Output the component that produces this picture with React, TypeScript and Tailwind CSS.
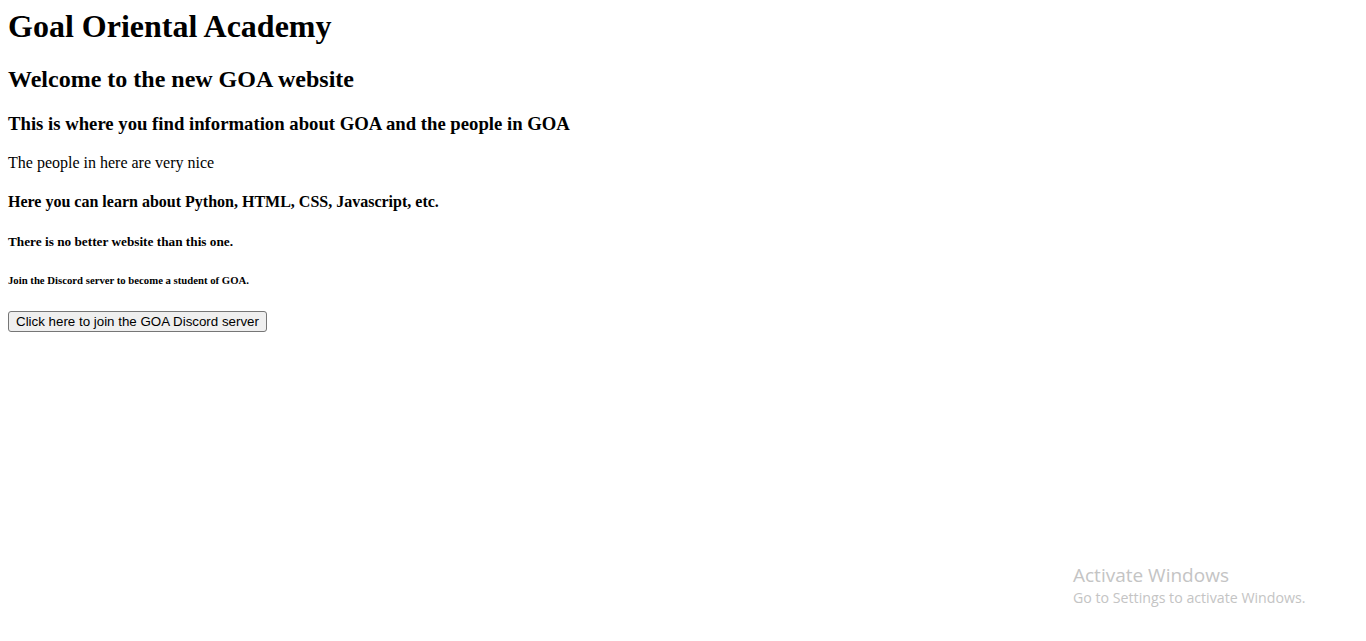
export default function App() {
  return (
    <div className="relative min-h-screen bg-white p-2 font-['Liberation_Serif',serif] text-black">
      <h1 className="mb-[21.44px] text-[32px] font-bold leading-[normal]">Goal Oriental Academy</h1>
      <h2 className="mb-[19.92px] text-[24px] font-bold leading-[normal]">Welcome to the new GOA website</h2>
      <h3 className="mb-[18.72px] text-[18.72px] font-bold leading-[normal]">
        This is where you find information about GOA and the people in GOA
      </h3>
      <p className="mb-[21.28px] text-[16px] leading-[normal]">The people in here are very nice</p>
      <h4 className="mb-[22.18px] text-[16px] font-bold leading-[normal]">
        Here you can learn about Python, HTML, CSS, Javascript, etc.
      </h4>
      <h5 className="mb-[24.98px] text-[13.28px] font-bold leading-[normal]">There is no better website than this one.</h5>
      <h6 className="mb-[24.98px] text-[10.72px] font-bold leading-[normal]">
        Join the Discord server to become a student of GOA.
      </h6>
      <button className="block h-[21px] rounded-[3px] border border-[#767676] bg-[#efefef] px-[7px] font-['Liberation_Sans',sans-serif] text-[13.333px] leading-[normal] text-black">
        Click here to join the GOA Discord server
      </button>

      {/* watermark over the page */}
      <div className="pointer-events-none absolute left-[1073px] top-[562px] font-['Open_Sans',sans-serif] text-[#c4c4c4]">
        <div className="text-[19px] leading-[26px]">Activate Windows</div>
        <div className="text-[14.2px] leading-[20px]">Go to Settings to activate Windows.</div>
      </div>
    </div>
  )
}
